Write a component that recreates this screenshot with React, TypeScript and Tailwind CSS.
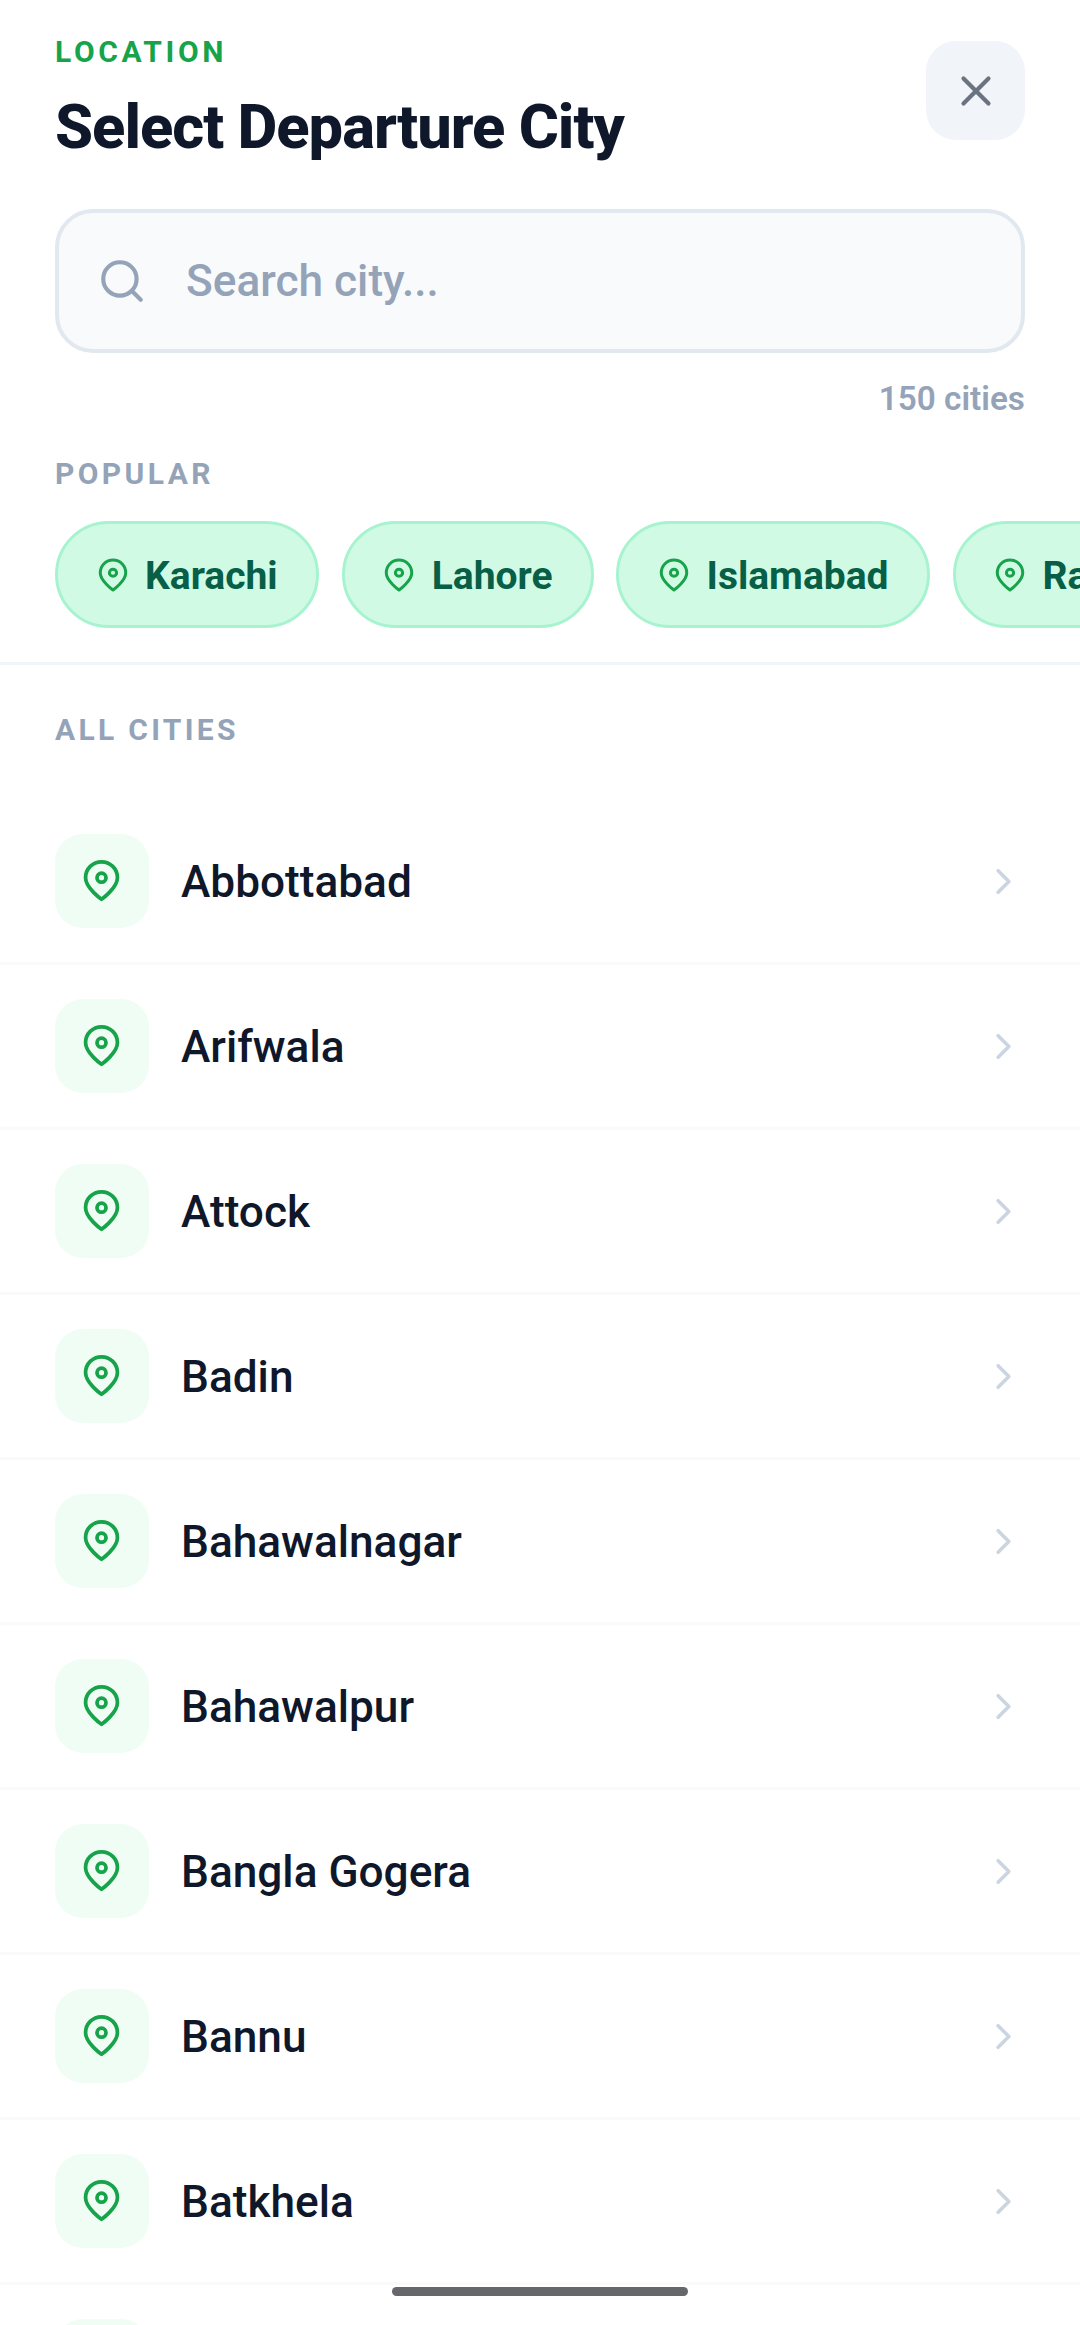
import React from "react";
import { ChevronRight, Search, X } from "lucide-react";

const popular = ["Karachi", "Lahore", "Islamabad", "Rawalpindi"];

const cities = [
  "Abbottabad",
  "Arifwala",
  "Attock",
  "Badin",
  "Bahawalnagar",
  "Bahawalpur",
  "Bangla Gogera",
  "Bannu",
  "Batkhela",
  "Bhakkar",
];

// slightly squatter than lucide's MapPin, with a smaller inner ring
const Pin: React.FC<{ size: number }> = ({ size }) => (
  <svg
    width={size}
    height={size}
    viewBox="0 0 24 24"
    fill="none"
    stroke="#16a34a"
    strokeWidth={2}
    strokeLinecap="round"
    strokeLinejoin="round"
    className="shrink-0"
  >
    <path d="M20.5 10.5c0 5.5-8.5 11.5-8.5 11.5s-8.5-6-8.5-11.5a8.5 8.5 0 0 1 17 0Z" />
    <circle cx="12" cy="10.5" r="2.4" />
  </svg>
);

const App: React.FC = () => {
  return (
    <div className="relative h-[2325px] w-[1080px] overflow-hidden bg-white font-['Roboto',sans-serif]">
      <div className="flex items-start justify-between px-[55px] pt-[41px]">
        <div>
          <p className="text-[30px] leading-[22px] font-bold tracking-[3.6px] text-[#16a34a]">LOCATION</p>
          <h1 className="mt-[28px] text-[61.4px] leading-[72px] font-extrabold tracking-[-1px] text-[#0f172a]">Select Departure City</h1>
        </div>
        <button className="flex h-[99px] w-[99px] items-center justify-center rounded-[30px] bg-[#f1f5f9]">
          <X size={50} strokeWidth={2} className="text-[#6b7280]" />
        </button>
      </div>

      <div className="mx-[55px] mt-[46px] flex h-[144px] items-center rounded-[38px] border-[4px] border-[#e2e8f0] bg-[#f8fafc] pl-[38px]">
        <Search size={50} strokeWidth={2} className="text-[#94a3b8]" />
        <span className="ml-[39px] text-[44.2px] font-medium text-[#94a3b8]">Search city...</span>
      </div>

      <p className="mt-[27px] pr-[55px] text-right text-[33.3px] leading-[38px] font-semibold text-[#94a3b8]">150 cities</p>

      <p className="mt-[37px] pl-[55px] text-[30px] leading-[38px] font-bold tracking-[3.4px] text-[#94a3b8]">POPULAR</p>

      <div className="mt-[28px] flex gap-[22.5px] overflow-hidden pl-[55px]">
        {popular.map((city) => (
          <div
            key={city}
            className="flex h-[107px] shrink-0 items-center gap-[14.5px] rounded-full border-[3px] border-[#a7f3d0] bg-[#d1fae5] pl-[36.5px] pr-[38.5px]"
          >
            <Pin size={36} />
            <span className="pt-[4px] text-[39px] font-bold text-[#065f46]">{city}</span>
          </div>
        ))}
      </div>

      <div className="mt-[34px] h-[3px] bg-[#f1f5f9]" />

      <p className="mt-[46px] pl-[55px] text-[30px] leading-[38px] font-bold tracking-[3.3px] text-[#94a3b8]">ALL CITIES</p>

      <div className="mt-[51px]">
        {cities.map((city) => (
          <div key={city} className="flex h-[165px] items-center border-b-[3px] border-[#f8fafc] px-[55px]">
            <div className="flex h-[94px] w-[94px] shrink-0 items-center justify-center rounded-[28px] bg-[#f0fdf4] pb-[2px] pr-[2px]">
              <Pin size={45} />
            </div>
            <span className="ml-[32px] flex-1 pt-[3px] text-[44.2px] font-medium text-[#0f172a]">{city}</span>
            <ChevronRight size={43} strokeWidth={2} className="text-[#cbd5e1]" />
          </div>
        ))}
      </div>

      <div className="absolute bottom-[29px] left-[392px] h-[9px] w-[296px] rounded-full bg-[#66676b]" />
    </div>
  );
};

export default App;
